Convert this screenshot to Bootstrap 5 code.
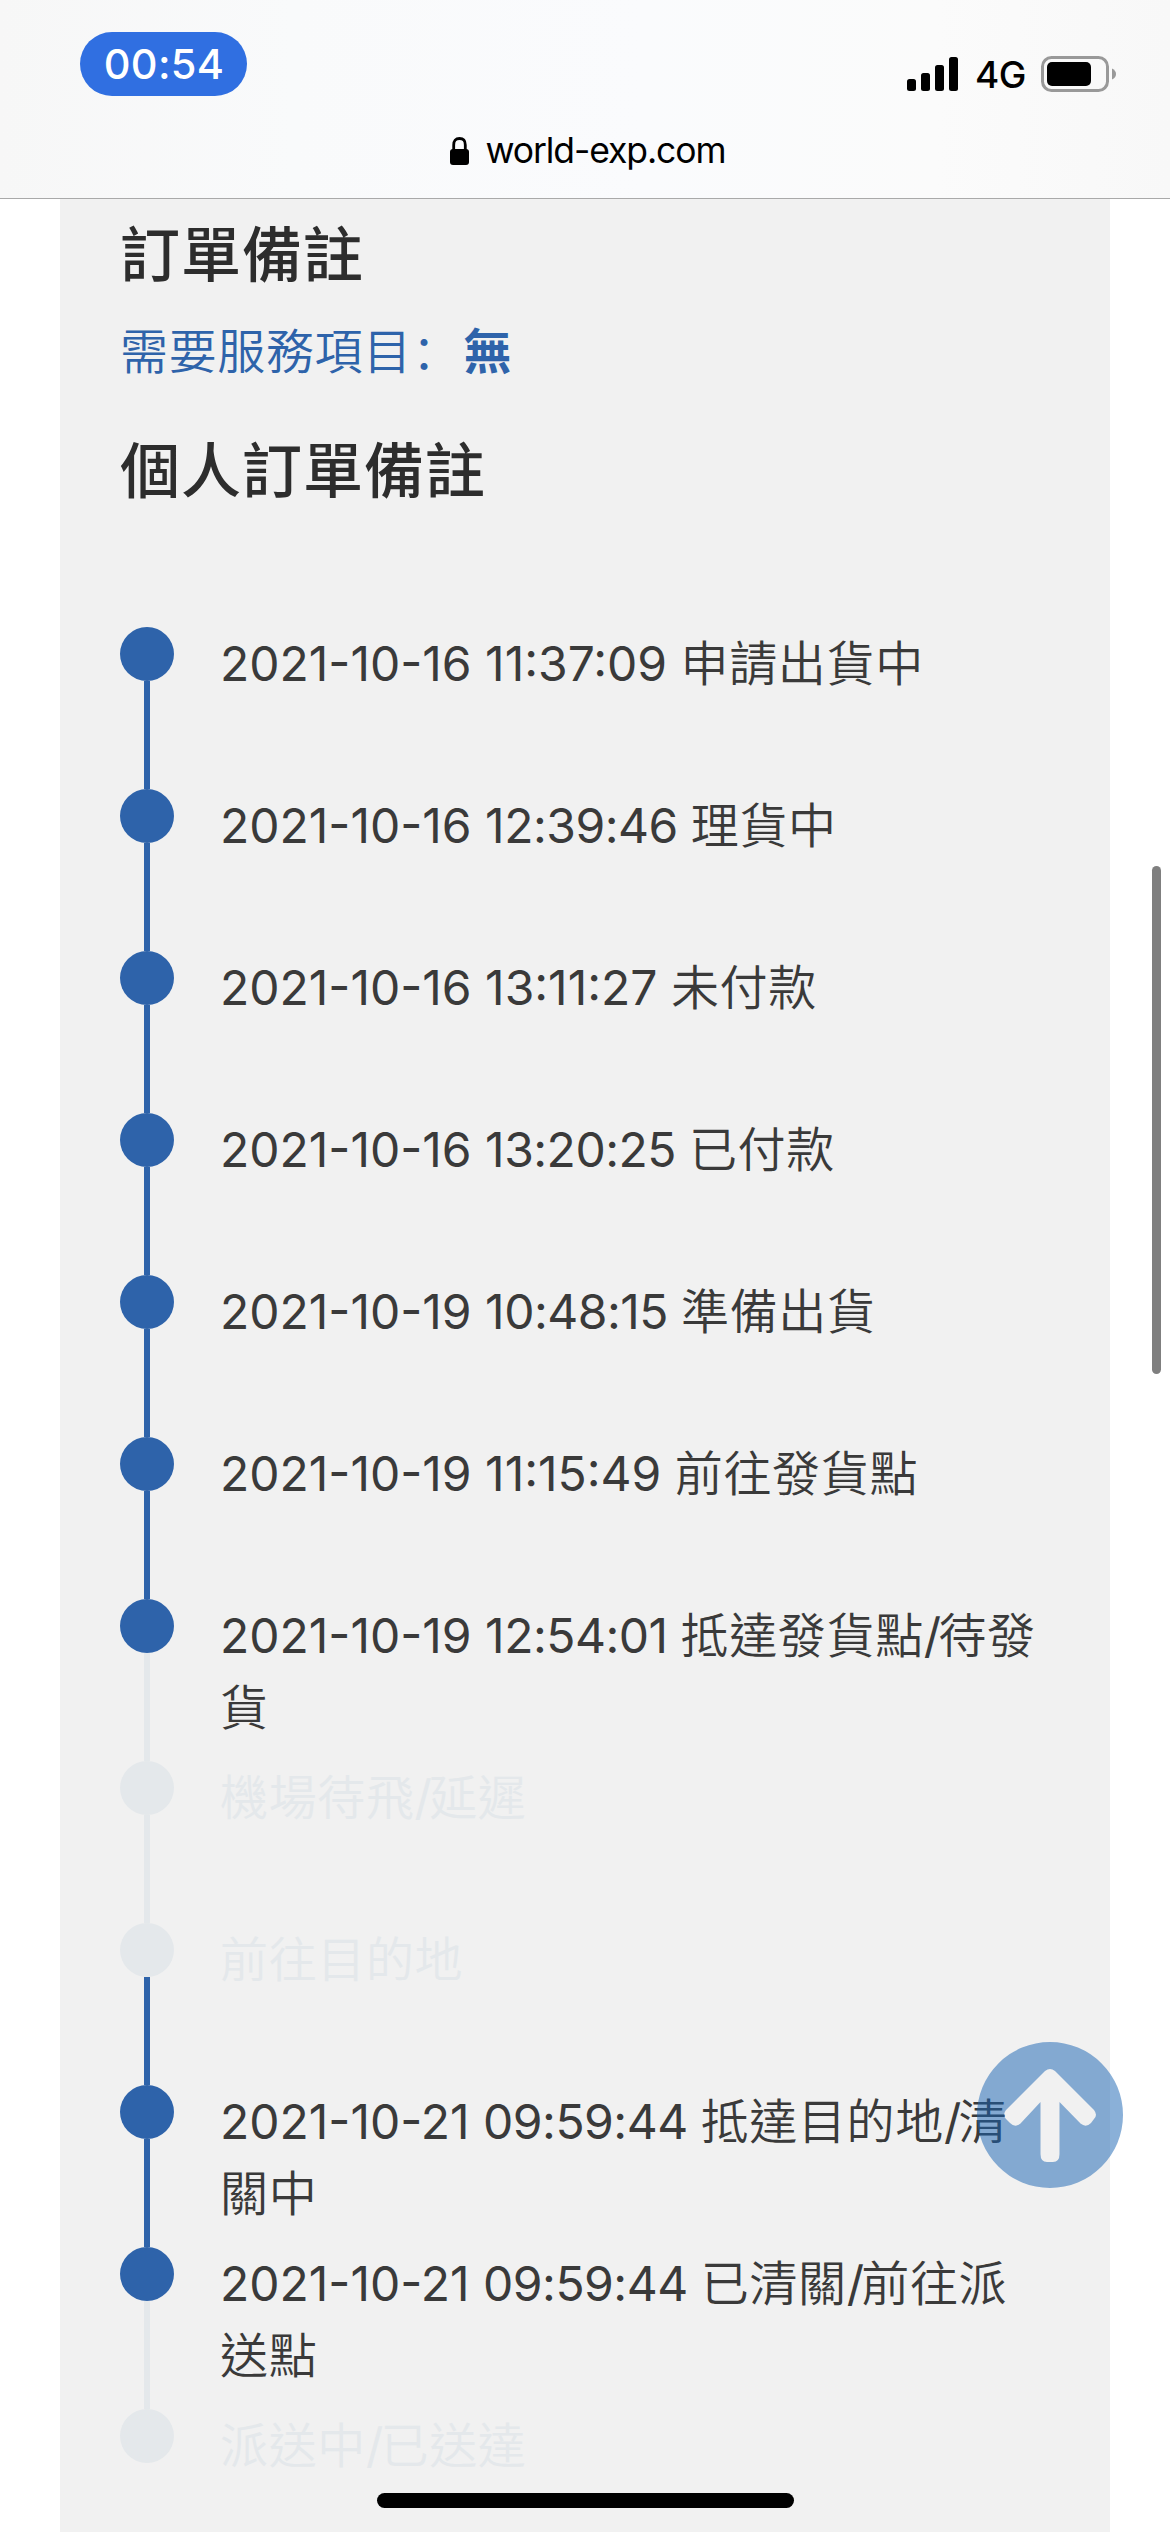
<!DOCTYPE html>
<html lang="zh-Hant">
<head>
<meta charset="utf-8">
<meta name="viewport" content="width=device-width, initial-scale=1">
<title>world-exp.com</title>
<link href="https://cdn.jsdelivr.net/npm/bootstrap@5.3.0/dist/css/bootstrap.min.css" rel="stylesheet">
<style>
  body { font-family: Inter, "Noto Sans CJK TC", sans-serif; color: #3a3a3a; font-size: 48px; line-height: 72px; font-weight: 350; }
  .screen { width: 1170px; height: 2532px; }
  .browser-bar { height: 199px; border-bottom: 1px solid #a9a9a9; color: #000; font-weight: 400;
    background: linear-gradient(90deg, #f7f7f7 0, #f9fafb 25%, #fafbfd 55%, #fbfbfb 80%, #f8f8f8 100%); }
  .status-row { height: 129px; padding: 32px 53px 0 80px; }
  .clock { width: 167px; height: 64px; background: #306fe1; font-size: 41.5px; line-height: 64px; letter-spacing: .3px; padding-left: 1px; }
  .signals { padding-top: 24px; }
  .network { font-size: 37px; line-height: 38px; margin-left: 16px; width: 66px; letter-spacing: -.6px; }
  .address { font-size: 35.5px; line-height: 44px; letter-spacing: -1.1px; padding-left: 5px; }
  .address svg { margin-right: 17px; }
  .panel { width: 1050px; background: #f1f1f1; padding: 20px 60px 0; }
  .section-title { font-size: 60px; line-height: 72px; font-weight: 500; letter-spacing: 1px; color: #2d2d2d; }
  .service { color: #2e63aa; letter-spacing: .65px; margin: 25px 0 47px; }
  .service strong { margin-left: 3px; }
  .colon { font-family: "Noto Sans CJK SC", sans-serif; line-height: 1; }
  .track { padding-top: 120px; }
  .step { height: 162px; gap: 46px; }
  .rail { width: 54px; }
  .dot { width: 54px; height: 54px; background: #2e63aa; }
  .stem { width: 6px; background: #2e63aa; }
  .step.idle { color: #e4e8eb; }
  .step.idle .dot, .stem.idle { background: #e4e8eb; }
  .label { padding-top: 1px; letter-spacing: .65px; width: 840px; }
  .stamp { letter-spacing: 0; font-weight: 400; }
  .stamp.snug span { letter-spacing: -.5px; }
  .slash { letter-spacing: -2.7px; font-weight: 400; }
  .to-top { left: 977px; top: 2042px; }
  .scroll-thumb { left: 1152px; top: 866px; width: 9px; height: 508px; background: #7f7f7f; }
  .home-bar { left: 377px; top: 2493px; width: 417px; height: 15px; background: #000; }
</style>
</head>
<body class="bg-white m-0">
<div class="screen position-relative overflow-hidden d-flex flex-column">
  <header class="browser-bar flex-shrink-0">
    <div class="status-row d-flex justify-content-between align-items-start">
      <div class="clock rounded-pill text-white text-center fw-medium">00:54</div>
      <div class="signals d-flex align-items-start">
        <svg width="52" height="35" viewBox="0 0 52 35"><rect y="23" width="9" height="12" rx="2.5"/><rect x="14" y="17" width="9" height="18" rx="2.5"/><rect x="28" y="9" width="9" height="26" rx="2.5"/><rect x="42" y="1" width="9" height="34" rx="2.5"/></svg>
        <span class="network fw-medium">4G</span>
        <svg width="76" height="36" viewBox="0 0 76 36"><rect x="1.5" y="1.5" width="65" height="33" rx="9" fill="none" stroke="#999" stroke-width="3"/><rect x="6" y="6" width="44" height="24" rx="5"/><path d="M71 12.5q4 2 4 5.500t-4 5.500z" fill="#999"/></svg>
      </div>
    </div>
    <div class="address d-flex justify-content-center align-items-center">
      <svg width="19" height="28" viewBox="0 0 19 28"><rect y="12" width="19" height="16" rx="3"/><path d="M3.700 13V8q0-6.500 5.800-6.500T15.300 8v5" fill="none" stroke="#000" stroke-width="2.800"/></svg>
      <span>world-exp.com</span>
    </div>
  </header>

  <main class="panel mx-auto flex-grow-1">
    <h2 class="section-title m-0">訂單備註</h2>
    <p class="service">需要服務項目<span class="colon" lang="zh-Hans">：</span><strong>無</strong></p>
    <h2 class="section-title m-0">個人訂單備註</h2>

    <ol class="track list-unstyled m-0">
      <li class="step d-flex"><div class="rail d-flex flex-column align-items-center"><i class="dot rounded-circle"></i><i class="stem flex-grow-1"></i></div><div class="label"><span class="stamp">2021-10-16 11:37:09 </span>申請出貨中</div></li>
      <li class="step d-flex"><div class="rail d-flex flex-column align-items-center"><i class="dot rounded-circle"></i><i class="stem flex-grow-1"></i></div><div class="label"><span class="stamp snug">2021-10-16 <span>12:39:46 </span></span>理貨中</div></li>
      <li class="step d-flex"><div class="rail d-flex flex-column align-items-center"><i class="dot rounded-circle"></i><i class="stem flex-grow-1"></i></div><div class="label"><span class="stamp">2021-10-16 13:11:27 </span>未付款</div></li>
      <li class="step d-flex"><div class="rail d-flex flex-column align-items-center"><i class="dot rounded-circle"></i><i class="stem flex-grow-1"></i></div><div class="label"><span class="stamp snug">2021-10-16 <span>13:20:25 </span></span>已付款</div></li>
      <li class="step d-flex"><div class="rail d-flex flex-column align-items-center"><i class="dot rounded-circle"></i><i class="stem flex-grow-1"></i></div><div class="label"><span class="stamp snug">2021-10-19 <span>10:48:15 </span></span>準備出貨</div></li>
      <li class="step d-flex"><div class="rail d-flex flex-column align-items-center"><i class="dot rounded-circle"></i><i class="stem flex-grow-1"></i></div><div class="label"><span class="stamp">2021-10-19 11:15:49 </span>前往發貨點</div></li>
      <li class="step d-flex"><div class="rail d-flex flex-column align-items-center"><i class="dot rounded-circle"></i><i class="stem idle flex-grow-1"></i></div><div class="label"><span class="stamp snug">2021-10-19 <span>12:54:01 </span></span>抵達發貨點<span class="slash">/</span>待發<br>貨</div></li>
      <li class="step idle d-flex"><div class="rail d-flex flex-column align-items-center"><i class="dot rounded-circle"></i><i class="stem idle flex-grow-1"></i></div><div class="label">機場待飛<span class="slash">/</span>延遲</div></li>
      <li class="step idle d-flex"><div class="rail d-flex flex-column align-items-center"><i class="dot rounded-circle"></i><i class="stem flex-grow-1"></i></div><div class="label">前往目的地</div></li>
      <li class="step d-flex"><div class="rail d-flex flex-column align-items-center"><i class="dot rounded-circle"></i><i class="stem flex-grow-1"></i></div><div class="label"><span class="stamp snug">2021-10-21 <span>09:59:44 </span></span>抵達目的地<span class="slash">/</span>清<br>關中</div></li>
      <li class="step d-flex"><div class="rail d-flex flex-column align-items-center"><i class="dot rounded-circle"></i><i class="stem idle flex-grow-1"></i></div><div class="label"><span class="stamp snug">2021-10-21 <span>09:59:44 </span></span>已清關<span class="slash">/</span>前往派<br>送點</div></li>
      <li class="step idle d-flex"><div class="rail d-flex flex-column align-items-center"><i class="dot rounded-circle"></i></div><div class="label">派送中<span class="slash">/</span>已送達</div></li>
    </ol>
  </main>

  <svg class="to-top position-absolute" width="146" height="146" viewBox="0 0 146 146"><path fill="#1561b1" fill-opacity=".5" fill-rule="evenodd" d="M73 0a73 73 0 1 1 0 146a73 73 0 1 1 0-146zM68 29L29 68Q25 73 29 77L33 81Q38 86 43.500 81.500L63.500 60V112Q63.500 120 70 120H76Q82.500 120 82.500 112V60L103.500 81.500Q109 86 114 81L117 77Q121 73 117 68L78 29Q73 25 68 29z"/></svg>
  <div class="scroll-thumb position-absolute rounded-pill"></div>
  <div class="home-bar position-absolute rounded-pill"></div>
</div>
<script src="https://cdn.jsdelivr.net/npm/bootstrap@5.3.0/dist/js/bootstrap.bundle.min.js"></script>
</body>
</html>
